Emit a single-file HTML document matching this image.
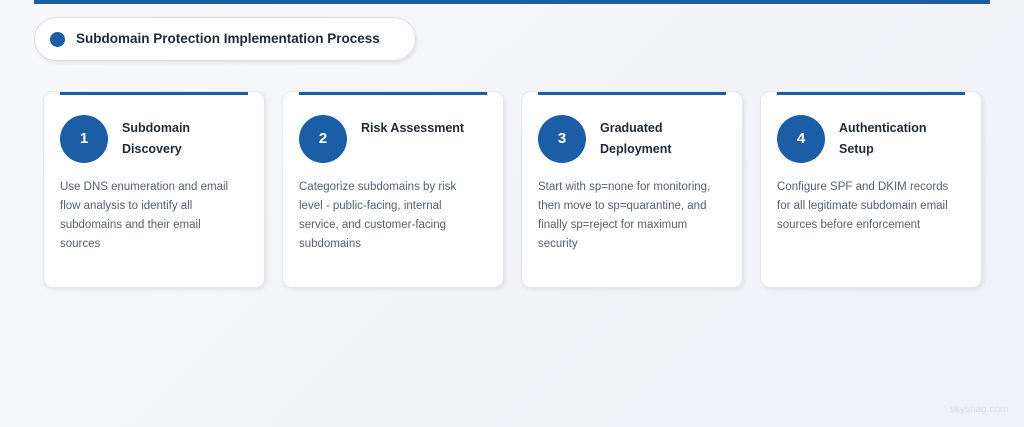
<!DOCTYPE html>
<html><head><style>
body{margin:0;width:1024px;height:427px;overflow:hidden;background:linear-gradient(135deg,#f7f8fa,#eef1f6);font-family:"Liberation Sans",sans-serif;position:relative}
.top{position:absolute;left:34px;top:0;width:956px;height:4px;background:#1b5ea6}
.pill{position:absolute;left:34px;top:17px;width:380px;height:42px;border:1px solid #d9dee7;border-radius:22px;background:#fff;box-shadow:1px 2px 3px rgba(0,0,0,.08)}
.pill .dot{position:absolute;left:15px;top:14px;width:15px;height:15px;border-radius:50%;background:#1b5ea6}
.pill span{position:absolute;left:41px;top:13px;font-size:13.5px;font-weight:bold;color:#1f2937}
.card{position:absolute;top:91px;width:220px;height:195px;background:#fff;border:1px solid #e3e6ec;border-radius:10px;box-shadow:2px 2px 4px rgba(0,0,0,.07)}
.card .bar{position:absolute;left:16px;top:0;width:188px;height:3px;background:#1b5ea6}
.card .num{position:absolute;left:16px;top:23px;width:48px;height:48px;border-radius:50%;background:#1b5ea6;color:#fff;font-weight:bold;font-size:15px;text-align:center;line-height:48px}
.card h3{position:absolute;left:78px;top:26px;margin:0;font-size:12.5px;line-height:21px;color:#1f2937;width:130px}
.card p{position:absolute;left:16px;top:86px;margin:0;font-size:11.5px;line-height:19px;color:#566070;width:196px}
.wm{position:absolute;left:950px;top:404px;font-size:10px;color:#dde1e7}
</style></head><body>
<div class="top"></div>
<div class="pill"><div class="dot"></div><span>Subdomain Protection Implementation Process</span></div>
<div class="card" style="left:43px"><div class="bar"></div><div class="num">1</div><h3>Subdomain<br>Discovery</h3><p>Use DNS enumeration and email<br>flow analysis to identify all<br>subdomains and their email<br>sources</p></div>
<div class="card" style="left:282px"><div class="bar"></div><div class="num">2</div><h3>Risk Assessment</h3><p>Categorize subdomains by risk<br>level - public-facing, internal<br>service, and customer-facing<br>subdomains</p></div>
<div class="card" style="left:521px"><div class="bar"></div><div class="num">3</div><h3>Graduated<br>Deployment</h3><p>Start with sp=none for monitoring,<br>then move to sp=quarantine, and<br>finally sp=reject for maximum<br>security</p></div>
<div class="card" style="left:760px"><div class="bar"></div><div class="num">4</div><h3>Authentication<br>Setup</h3><p>Configure SPF and DKIM records<br>for all legitimate subdomain email<br>sources before enforcement</p></div>
<div class="wm">skysnag.com</div>
</body></html>
